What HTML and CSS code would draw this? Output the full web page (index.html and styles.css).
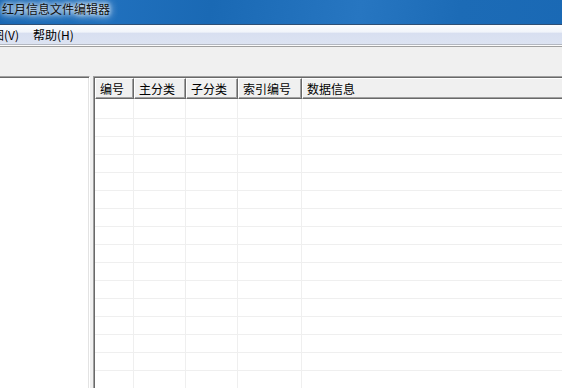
FILE: index.html
```html
<!DOCTYPE html>
<html lang="zh-CN">
<head>
    <meta charset="UTF-8">
    <title>红月信息文件编辑器</title>
    <link rel="stylesheet" href="styles.css">
</head>
<body>
    <div class="window">
        <div class="titlebar"><span class="title">红月信息文件编辑器</span></div>
        <div class="menubar">
            <span class="menu-item menu-first">视图(V)</span>
            <span class="menu-item">帮助(H)</span>
        </div>
        <div class="toolbar"></div>
        <div class="main">
            <div class="tree"></div>
            <div class="list">
                <table class="grid">
                    <colgroup>
                        <col style="width:39px">
                        <col style="width:52px">
                        <col style="width:52px">
                        <col style="width:64px">
                        <col>
                    </colgroup>
                    <thead>
                        <tr><th>编号</th><th>主分类</th><th>子分类</th><th>索引编号</th><th>数据信息</th></tr>
                    </thead>
                    <tbody>
                        <tr><td></td><td></td><td></td><td></td><td></td></tr>
                        <tr><td></td><td></td><td></td><td></td><td></td></tr>
                        <tr><td></td><td></td><td></td><td></td><td></td></tr>
                        <tr><td></td><td></td><td></td><td></td><td></td></tr>
                        <tr><td></td><td></td><td></td><td></td><td></td></tr>
                        <tr><td></td><td></td><td></td><td></td><td></td></tr>
                        <tr><td></td><td></td><td></td><td></td><td></td></tr>
                        <tr><td></td><td></td><td></td><td></td><td></td></tr>
                        <tr><td></td><td></td><td></td><td></td><td></td></tr>
                        <tr><td></td><td></td><td></td><td></td><td></td></tr>
                        <tr><td></td><td></td><td></td><td></td><td></td></tr>
                        <tr><td></td><td></td><td></td><td></td><td></td></tr>
                        <tr><td></td><td></td><td></td><td></td><td></td></tr>
                        <tr><td></td><td></td><td></td><td></td><td></td></tr>
                        <tr><td></td><td></td><td></td><td></td><td></td></tr>
                        <tr><td></td><td></td><td></td><td></td><td></td></tr>
                    </tbody>
                </table>
            </div>
        </div>
    </div>
</body>
</html>
```

FILE: styles.css
```css
body {
    margin: 0;
    background-color: #f0f0f0;
    font-family: "Noto Sans CJK SC", "Liberation Sans", sans-serif;
    font-size: 12px;
    color: #000;
    overflow: hidden;
}
.window {
    width: 620px;
    height: 410px;
    display: flex;
    flex-direction: column;
}
.titlebar {
    height: 24px;
    flex-shrink: 0;
    padding-left: 2px;
    border-bottom: 1px solid #2f4f74;
    background: linear-gradient(100deg, #1766b3 0%, #2070bd 18%, #1a69b4 34%, #2776c1 58%, #1c6bb6 74%, #1968b4 100%);
}
.title {
    display: inline-block;
    line-height: 18px;
    color: #111;
    text-shadow: 0 0 4px #fff, 0 0 8px #fff, 0 0 10px #cfe3f6;
}
.menubar {
    height: 19px;
    flex-shrink: 0;
    display: flex;
    align-items: center;
    border-bottom: 1px solid #b4b8c1;
    background: linear-gradient(#fcfdfe 0%, #f1f4fa 38%, #d8dff0 42%, #dce3f2 100%);
}
.menu-item {
    padding: 0 7px;
    line-height: 18px;
}
.menu-first {
    margin-left: -27px;
}
.toolbar {
    height: 30px;
    flex-shrink: 0;
    border-top: 1px solid #fcfcfc;
    box-shadow: inset 0 1px 0 #a0a0a0;
}
.main {
    flex: 1;
    min-height: 0;
    display: flex;
    gap: 3px;
}
.tree {
    width: 92px;
    margin-left: -2px;
    box-sizing: border-box;
    flex-shrink: 0;
    background-color: #fff;
    border: 1px solid;
    border-color: #a0a0a0 #fff #fff #a0a0a0;
    box-shadow: inset 1px 1px 0 #696969, inset -1px -1px 0 #e3e3e3;
}
.list {
    flex: 1;
    overflow: hidden;
    padding: 1px 0 0 1px;
    background-color: #fff;
    border: 1px solid;
    border-color: #a0a0a0 #fff #fff #a0a0a0;
    box-shadow: inset 1px 1px 0 #696969;
}
.grid {
    width: 100%;
    table-layout: fixed;
    border-spacing: 0;
}
.grid th {
    height: 21px;
    box-sizing: border-box;
    padding: 0 0 0 4px;
    text-align: left;
    font-weight: normal;
    white-space: nowrap;
    background-color: #f0f0f0;
    border: 1px solid;
    border-color: #fff #696969 #696969 #fff;
    box-shadow: inset -1px -1px 0 #a0a0a0;
}
.grid td {
    height: 18px;
    box-sizing: border-box;
    padding: 0;
    border-right: 1px solid #efefef;
    border-bottom: 1px solid #efefef;
}
.grid tbody tr:first-child td {
    height: 20px;
}
```
